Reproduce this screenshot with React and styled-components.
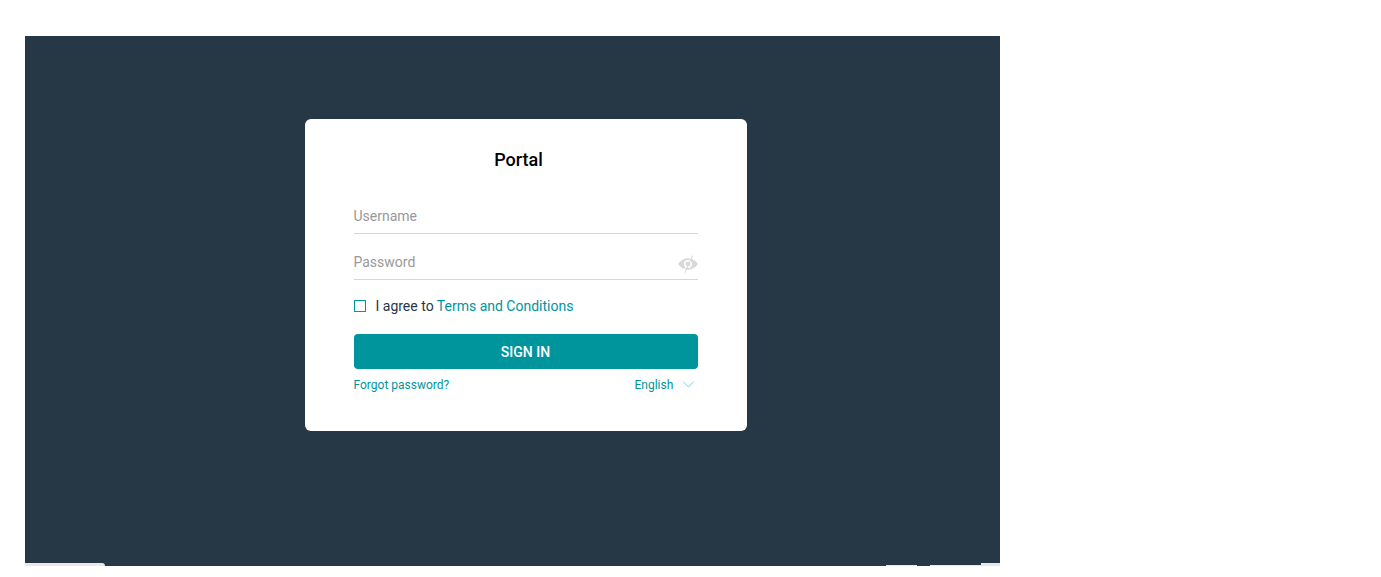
import React, { useState } from "react";
import styled, { createGlobalStyle } from "styled-components";

const GlobalStyle = createGlobalStyle`
  *, *::before, *::after { box-sizing: border-box; }
  body { margin: 0; background: #fff; font-family: Roboto, "Liberation Sans", sans-serif; }
`;

const Stage = styled.main`
  display: flex;
  flex-direction: column;
  margin: 36px 381px 0 25px;
  background: #263746;
`;

const CardArea = styled.div`
  display: flex;
  justify-content: center;
  padding: 83px 0 132px 26px;
`;

const Card = styled.form`
  width: 100%;
  max-width: 442px;
  padding: 28px 49px 38px;
  border-radius: 6px;
  background: #fff;
`;

const Title = styled.h1`
  margin: 0 0 33px;
  padding-right: 14px;
  font-size: 18px;
  line-height: 26px;
  font-weight: 500;
  text-align: center;
  color: #000;
`;

const Field = styled.div`
  display: flex;
  align-items: center;
  height: 28px;
  margin-bottom: 18px;
  padding-bottom: 8px;
  border-bottom: 1px solid #d6d6d6;
`;

const TextInput = styled.input`
  flex: 1;
  min-width: 0;
  height: 20px;
  padding: 0;
  border: 0;
  outline: 0;
  background: transparent;
  font: 400 14px/20px Roboto, "Liberation Sans", sans-serif;
  color: #263746;
  &::placeholder { color: #999; opacity: 1; }
`;

const IconButton = styled.button`
  display: flex;
  padding: 4px 0 0;
  border: 0;
  background: transparent;
  color: #d8d8d8;
  cursor: pointer;
`;

const Agreement = styled.div`
  display: flex;
  align-items: center;
  height: 16px;
  margin-bottom: 20px;
  font-size: 14px;
  line-height: 16px;
  color: #263746;
`;

const Checkbox = styled.input`
  appearance: none;
  width: 12px;
  height: 12px;
  margin: 0 10px 0 0;
  border: 1px solid #00959c;
  background: #fff;
  &:checked { background: #00959c; }
`;

const TextLink = styled.a`
  color: #00959c;
  text-decoration: none;
`;

const SubmitButton = styled.button`
  display: block;
  width: 100%;
  height: 35px;
  margin-bottom: 8px;
  padding: 0;
  border: 0;
  border-radius: 4px;
  background: #00959c;
  font: 500 14px/20px Roboto, "Liberation Sans", sans-serif;
  color: #fff;
  cursor: pointer;
`;

const CardFooter = styled.div`
  display: flex;
  justify-content: space-between;
  align-items: center;
  font-size: 12px;
  line-height: 16px;
`;

const LanguagePicker = styled.div`
  display: grid;
  align-items: center;
  padding-right: 4px;
  & > * { grid-area: 1 / 1; }
  & > svg { justify-self: end; pointer-events: none; }
`;

const LanguageSelect = styled.select`
  appearance: none;
  height: 16px;
  padding: 0 20px 0 0;
  border: 0;
  outline: 0;
  background: transparent;
  font: 400 12px/16px Roboto, "Liberation Sans", sans-serif;
  color: #00959c;
`;

const BottomEdge = styled.div`
  display: flex;
  align-items: flex-end;
  height: 3px;
`;

const Tab = styled.span`
  width: ${(p) => p.$width}px;
  height: ${(p) => p.$height}px;
  margin-left: ${(p) => p.$before};
  border-radius: 0 ${(p) => p.$round || 0}px 0 0;
  background: #e8e7ea;
`;

const EyeOff = () => (
  <svg width="20" height="18" viewBox="0 0 20 18" aria-hidden="true">
    <path d="M0 9C5 1.4 15 1.4 20 9C15 16.6 5 16.6 0 9Z" fill="currentColor" />
    <circle cx="10" cy="9" r="3.2" fill="none" stroke="#fff" strokeWidth="1.5" />
    <path d="M13.4 1.6L11 7M8.2 10.6L5.9 16" stroke="#fff" strokeWidth="0.9" />
    <path d="M14.6 0.6L7 17.6" stroke="currentColor" strokeWidth="1.1" />
  </svg>
);

const Chevron = () => (
  <svg width="11" height="9" viewBox="0 0 11 9" aria-hidden="true">
    <path d="M0.3 0.7L5.5 6L10.7 0.7" fill="none" stroke="#80cbd2" />
  </svg>
);

export default function App() {
  const [visible, setVisible] = useState(false);
  return (
    <>
      <GlobalStyle />
      <Stage>
        <CardArea>
          <Card onSubmit={(e) => e.preventDefault()}>
            <Title>Portal</Title>
            <Field>
              <TextInput aria-label="Username" placeholder="Username" autoComplete="username" />
            </Field>
            <Field>
              <TextInput
                aria-label="Password"
                placeholder="Password"
                type={visible ? "text" : "password"}
                autoComplete="current-password"
              />
              <IconButton type="button" aria-label="Show password" onClick={() => setVisible(!visible)}>
                <EyeOff />
              </IconButton>
            </Field>
            <Agreement>
              <Checkbox type="checkbox" id="agree" />
              <label htmlFor="agree">
                I agree to <TextLink href="#terms">Terms and Conditions</TextLink>
              </label>
            </Agreement>
            <SubmitButton type="submit">SIGN IN</SubmitButton>
            <CardFooter>
              <TextLink href="#forgot">Forgot password?</TextLink>
              <LanguagePicker>
                <LanguageSelect aria-label="Language">
                  <option>English</option>
                </LanguageSelect>
                <Chevron />
              </LanguagePicker>
            </CardFooter>
          </Card>
        </CardArea>
        <BottomEdge>
          <Tab $width={80} $height={3} $round={3} $before="0" />
          <Tab $width={31} $height={1} $before="auto" />
          <Tab $width={51} $height={1} $before="13px" />
          <Tab $width={19} $height={3} $before="0" />
        </BottomEdge>
      </Stage>
    </>
  );
}
